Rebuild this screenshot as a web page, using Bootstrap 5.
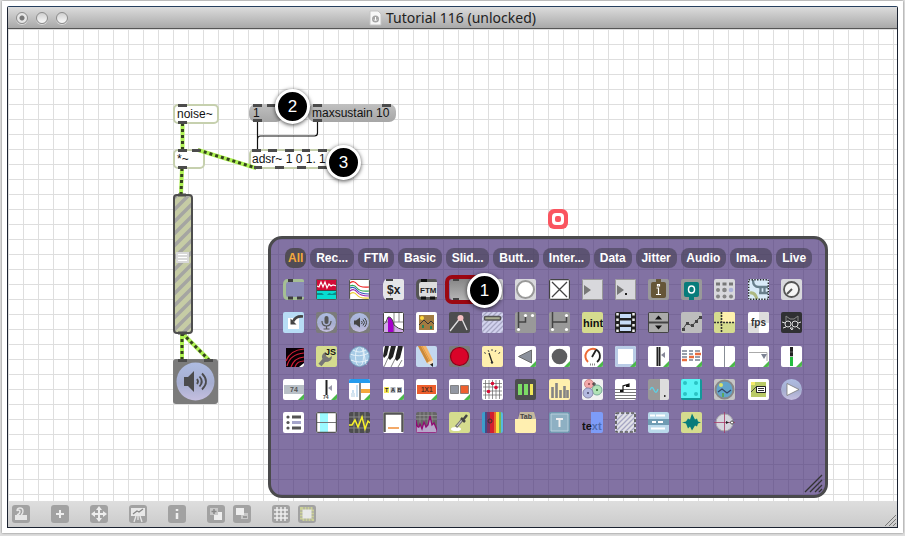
<!DOCTYPE html>
<html lang="en">
<head>
<meta charset="utf-8">
<meta name="viewport" content="width=device-width, initial-scale=1">
<title>Tutorial 116 (unlocked)</title>
<link href="https://cdn.jsdelivr.net/npm/bootstrap@5.3.0/dist/css/bootstrap.min.css" rel="stylesheet">
<style>
body{background:#dedede;font-family:"Liberation Sans",Arial,sans-serif;font-size:12px;line-height:16px;color:#111;padding:1px 2px 3px}
svg{display:block}
.sheet{background:#fff;padding:5px;box-shadow:0 0 2px #777;min-height:0}
.win{border:1px solid #1a2230;border-top-color:#27405f;border-radius:2px 2px 0 0;min-height:0}
.titlebar{height:22px;background:linear-gradient(#dcdcdc,#a9a9a9);border-bottom:1px solid #555;padding:0 8px}
.titlebar h1{font:14px/20px "Noto Sans","Open Sans",sans-serif;color:#222}
.light{width:12px;height:12px;border-radius:50%;border:1px solid #8c8c8c;background:linear-gradient(#cfcfcf,#fafafa);box-shadow:0 1px 0 #d8d8d8}
.light.dot{background:radial-gradient(#777 0 2px,#e6e6e6 3px)}
.lights{width:80px}
.patcher{min-height:0;overflow:hidden;background:linear-gradient(#dedede 1px,transparent 1px) 0 0/15px 15px,linear-gradient(90deg,#dedede 1px,transparent 1px) 0 0/15px 15px,#fff}
.node{position:absolute;height:20px;line-height:16px;white-space:nowrap;padding-left:2px}
.obj{background:#fff;border:2px solid #c6d0ae;border-radius:5px}
.msg{background:linear-gradient(#c0c0c0,#a6a6a6);border-radius:7px;height:18px;line-height:18px;padding-left:4px}
.n-noise{left:165px;top:75px;width:46px}
.n-mul{left:165px;top:120px;width:32px}
.n-one{left:241px;top:75px;width:34px}
.n-max{left:300px;top:75px;width:88px}
.n-adsr{left:241px;top:120px;width:84px;padding-left:1px}
.wires{position:absolute;left:0;top:0;pointer-events:none}
.step{position:absolute;width:35px;height:35px;border:3px solid #fff;border-radius:50%;background:#000;color:#fff;font-size:17px;box-shadow:0 1px 4px rgba(0,0,0,.7)}
.s1{left:459px;top:244px}.s2{left:267px;top:60px}.s3{left:318px;top:116px}
.rec{position:absolute;left:540px;top:180px}
.ring{position:absolute;left:435px;top:244px}
.palette{position:absolute;left:260px;top:207px;width:560px;height:262px;border:3px solid #4a4a4c;border-radius:14px;background:rgba(69,45,118,.67);padding:9px 14px}
.tabs{gap:4px;width:527px}
.tab{border:0;border-radius:8px;height:20px;padding:0 4px;background:rgba(70,64,84,.62);color:#fff;font-weight:700;line-height:20px}
.tab.active{background:#514c55;color:#f5a93c;padding:0 3px}
.tools{display:grid;grid-template-columns:repeat(16,21px);grid-template-rows:repeat(5,21px);justify-content:space-between;align-content:space-between;width:519px;height:154px;margin:11px 0 0 -2px}
.tool,.cmd{border:0;padding:0;background:none}
.tool svg{width:21px;height:21px;border-radius:2px;overflow:hidden}
.w{background:#fff}.g{background:#d8d8dc}.m{background:#999}.y{background:#d5dc8e}.c{background:#fff0ae}.k{background:#4d4d4f}.b{background:#c3d8ef}.d{background:#7b7b7b}
svg text{font-family:"Liberation Sans",Arial,sans-serif;font-weight:700}
.grip{position:absolute;right:2px;bottom:2px}
.cmdbar{position:relative;height:26px;background:linear-gradient(#dedede,#cbcbcb);padding:0 4px}
.cmd svg{width:18px;height:18px;border-radius:3px;background:#a2a2a2}
.grp{gap:8px}.groups{gap:21px}
</style>
</head>
<body class="vh-100 d-flex flex-column overflow-hidden">
<svg width="0" height="0" class="position-absolute" aria-hidden="true"><defs>
<path id="cn" d="M21 15v6h-6z" fill="#4bb84a"/>
<linearGradient id="ball" x2="0" y2="1"><stop stop-color="#aebce2"/><stop offset=".55" stop-color="#a6aed0"/><stop offset="1" stop-color="#c5bfe0"/></linearGradient>
<linearGradient id="grey" x2="0" y2="1"><stop stop-color="#868686"/><stop offset="1" stop-color="#b5b5b5"/></linearGradient>
<pattern id="hatch" width="12" height="12" patternUnits="userSpaceOnUse"><path fill="#c6cca5" d="M0 0h12v12H0z"/><path d="M-3 15L15-3M-9 9L9-9M3 21L21 3" stroke="#a5a5a2" stroke-width="3.500"/></pattern>
<pattern id="stripe" width="5" height="5" patternUnits="userSpaceOnUse"><path d="M-1 6L6-1M-1 1l2-2M4 6l2-2" stroke="#a6a6c4" stroke-width="1.300"/></pattern>
</defs></svg>
<main class="sheet flex-grow-1 d-flex flex-column">
<div class="win flex-grow-1 d-flex flex-column">
<header class="titlebar d-flex align-items-center flex-shrink-0">
<div class="lights d-flex gap-2"><button class="light dot p-0" aria-label="Close"></button><button class="light p-0" aria-label="Minimize"></button><button class="light p-0" aria-label="Zoom"></button></div>
<div class="flex-grow-1 d-flex justify-content-center align-items-center gap-1">
<svg width="13" height="16" viewBox="0 0 13 16"><path d="M1 1h8l3 3v11H1z" fill="#f7f7f7" stroke="#c4c4c4"/><circle cx="6.500" cy="9" r="3.500" fill="#a5a5a5"/><path d="M6.500 7v3M5 9.500l1.500 1.500L8 9.500" stroke="#fff" fill="none"/></svg>
<h1 class="m-0">Tutorial 116 (unlocked)</h1></div>
<div class="lights"></div>
</header>
<section class="patcher flex-grow-1 position-relative" aria-label="Patcher">
<div class="node obj n-noise">noise~</div>
<div class="node obj n-mul">*~</div>
<div class="node msg n-one">1</div>
<div class="node msg n-max">maxsustain 10</div>
<div class="node obj n-adsr">adsr~ 1 0 1. 1</div>
<svg class="wires" width="400" height="400" viewBox="8 29 400 400">
<rect x="174" y="195" width="18" height="138" rx="3" fill="url(#hatch)" stroke="#4d4d4d" stroke-width="2"/>
<path d="M176 252h13v11h-13z" fill="#d8d8d8"/><path d="M178 254.500h9m-9 3h9m-9 3h9" stroke="#fff"/>
<rect x="173" y="359" width="45" height="45" rx="3" fill="#7b7b7b"/><circle cx="195.500" cy="381.500" r="19" fill="url(#ball)"/>
<path d="M184 377h4l6-6v21l-6-6h-4z" fill="#4b4b4d"/><path d="M197 379q2 2.500 0 5M199.500 376.500q4.500 5 0 10M202 373.500q8 8 0 16" fill="none" stroke="#4b4b4d" stroke-width="1.800"/>
<path d="M257.500 121v30M317.500 121v12q0 3-3 3h-54q-3 0-3 4" fill="none" stroke="#111" stroke-width="1.200"/>
<path d="M182.500 123v28M182 168l-1 27M198 150l58 18M182 333v27M182 333l27 27" fill="none" stroke="#aef252" stroke-width="4"/>
<g stroke="#35421f" stroke-width="3" stroke-dasharray="3 3" fill="none"><path d="M182.500 123v28"/><path d="M182 168l-1 27"/><path d="M198 150l58 18"/><path d="M182 333v27"/><path d="M182 333l27 27"/></g>
<path d="M178 105.500h9M178 122.500h9M178 150.500h9M192 150.500h8M178 167.500h9M253 105.500h9M267 105.500h9M253 120.500h9M313 105.500h9M382 105.500h9M313 120.500h9M252 150.500h9M268 150.500h9M285 150.500h9M302 150.500h8M318 150.500h9M254 167.500h8M275 167.500h9M297 167.500h9M318 167.500h9M178 360.500h9M204 360.500h9M178 333h9M178 195h8" stroke="#4c4c4c" stroke-width="3"/>
</svg>
<div class="rec"><svg width="20" height="20"><rect width="20" height="20" rx="6" fill="#fa5560"/><rect x="4" y="4" width="12" height="12" rx="4" fill="#fff"/><rect x="7" y="7" width="6" height="6" rx="2" fill="#fa5560"/></svg></div>
<section class="palette" aria-label="Object palette">
<nav class="tabs d-flex"><button class="tab active">All</button><button class="tab flex-fill">Rec...</button><button class="tab flex-fill">FTM</button><button class="tab flex-fill">Basic</button><button class="tab flex-fill">Slid...</button><button class="tab flex-fill">Butt...</button><button class="tab flex-fill">Inter...</button><button class="tab flex-fill">Data</button><button class="tab flex-fill">Jitter</button><button class="tab flex-fill">Audio</button><button class="tab flex-fill">Ima...</button><button class="tab flex-fill">Live</button></nav>
<div class="tools">
<!-- row 1 -->
<button class="tool" aria-label="object"><svg viewBox="0 0 21 21"><path d="M21 1.500H5q-3.500 0-3.500 4v10q0 4 3.500 4h16" fill="#8a8ab6" stroke="#a5bf94" stroke-width="3"/><path d="M5 1.500h5M5 19h5M14 19h5" stroke="#3d3d3d" stroke-width="3"/></svg></button>
<button class="tool" aria-label="signal view"><svg viewBox="0 0 21 21"><path fill="#d20d38" d="M0 0h21v11H0z"/><path fill="#08ddd0" d="M0 12h21v9H0z"/><path d="M1 7l2 1 2-5 2 5 2-5 2 6 2-4 2 2 2-1 4 1" fill="none" stroke="#fff" stroke-width="1.200"/><path d="M1 14h5l2 2h3l2-2 3 1 4-2v3H1z" fill="#078f8d"/><path d="M0 11.500h21" stroke="#444"/><path d="M.5.500h20v20H.500z" fill="none" stroke="#555"/></svg></button>
<button class="tool" aria-label="multi curve"><svg class="w" viewBox="0 0 21 21"><g fill="none" stroke-width="1.200"><path stroke="#e22" d="M1 4q4-3 7 1t12 3"/><path stroke="#3a5" d="M1 7q4-2 7 2t12 3"/><path stroke="#35b" d="M1 9q4-2 7 2t12 4"/><path stroke="#92a" d="M1 12q4-3 7 1t12 4"/><path stroke="#ec3" d="M1 15q4-3 7 1t12 3"/><path stroke="#555" d="M.5.500h20v20H.500z"/></g></svg></button>
<button class="tool" aria-label="ftm message"><svg viewBox="0 0 21 21"><path d="M3 0h18v21H3q-3-2-3-5V5q0-3 3-5z" fill="#e5e5e8"/><path d="M3 1h7M3 20h7" stroke="#444" stroke-width="2"/><text x="4" y="15" font-size="12" fill="#222">$x</text></svg></button>
<button class="tool" aria-label="ftm object"><svg viewBox="0 0 21 21"><path d="M21 1.500H5q-3.500 0-3.500 4v10q0 4 3.500 4h16" fill="#ddd" stroke="#555" stroke-width="3"/><path d="M5 19h5M14 19h5M5 1.500h6" stroke="#111" stroke-width="3"/><text x="4" y="13.500" font-size="8" fill="#222">FTM</text></svg></button>
<button class="tool" aria-label="message"><svg viewBox="0 0 21 21"><path d="M21 0H4Q1 0 1 4v13q0 4 3 4h17" fill="url(#grey)"/><path d="M4 1h6M4 20h6" stroke="#444" stroke-width="2"/></svg></button>
<button class="tool" aria-label="comment"><svg class="g" viewBox="0 0 21 21"><path d="M3 4h15v13H3z" fill="#eee"/></svg></button>
<button class="tool" aria-label="button"><svg class="g" viewBox="0 0 21 21"><circle cx="10.500" cy="10.500" r="8.500" fill="#fff" stroke="#999" stroke-width="2"/></svg></button>
<button class="tool" aria-label="toggle"><svg class="w" viewBox="0 0 21 21"><path d="M.5.500h20v20H.500zM3 3l15 15M18 3L3 18" fill="none" stroke="#444" stroke-width="1.300"/></svg></button>
<button class="tool" aria-label="integer number"><svg class="g" viewBox="0 0 21 21"><path d="M.5.500h20v20H.500z" fill="none" stroke="#999"/><path d="M2 6l7 5-7 5z" fill="#777"/></svg></button>
<button class="tool" aria-label="float number"><svg class="g" viewBox="0 0 21 21"><path d="M.5.500h20v20H.500z" fill="none" stroke="#999"/><path d="M2 6l7 5-7 5z" fill="#777"/><path d="M10 14h2v2h-2z" fill="#222"/></svg></button>
<button class="tool" aria-label="inlet"><svg class="m" viewBox="0 0 21 21"><rect x="3" y="3" width="15" height="16" rx="2" fill="#655637"/><path d="M8 0h5v4H8z" fill="#655637"/><path d="M8.500 9h2v6M8 15.500h5M9.500 5.500h2v1.500h-2z" fill="none" stroke="#fff" stroke-width="1.200"/></svg></button>
<button class="tool" aria-label="outlet"><svg class="m" viewBox="0 0 21 21"><rect x="3" y="3" width="15" height="15" rx="2" fill="#087c7b"/><path d="M8 16h5v5H8z" fill="#087c7b"/><ellipse cx="10.500" cy="10.500" rx="3" ry="3.500" fill="none" stroke="#fff" stroke-width="1.500"/></svg></button>
<button class="tool" aria-label="matrix"><svg class="g" viewBox="0 0 21 21"><path d="M4 3.500v3M10.500 3.500v3M17 3.500v3" stroke="#777" stroke-width="4"/><g fill="#858585"><circle cx="4" cy="11" r="2"/><circle cx="10.500" cy="11" r="2.300"/><circle cx="4" cy="17.500" r="2"/><circle cx="10.500" cy="17.500" r="2"/><circle cx="17" cy="17.500" r="2"/></g><circle cx="17" cy="11" r="2.300" fill="#acb2d8"/></svg></button>
<button class="tool" aria-label="bpatcher"><svg viewBox="0 0 21 21"><path d="M0 0h21v21H0z" fill="#d9ebf8"/><path d="M5 1q0 7 6 7h9M11 14h9M12.500 8v6M16.500 8v6" fill="none" stroke="#68808c" stroke-width="2.300"/><path d="M2 14q5-1 7 6" fill="none" stroke="#aeb982" stroke-width="3"/><path d="M.7.700h19.600v19.600H.700z" fill="none" stroke="#222" stroke-width="1.400" stroke-dasharray="1.400 1.400"/></svg></button>
<button class="tool" aria-label="dial"><svg class="g" viewBox="0 0 21 21"><circle cx="10.500" cy="10.500" r="7.500" fill="#f5f5f5" stroke="#555" stroke-width="1.800"/><path d="M11 10l-5 5" stroke="#555" stroke-width="2"/></svg></button>
<!-- row 2 -->
<button class="tool" aria-label="send out"><svg viewBox="0 0 21 21"><path d="M0 0h21v21H0z" fill="#b7dcf5"/><path d="M5 6h11v11H5z" fill="#fff"/><path d="M20 4.500q-7-1-10 5" fill="none" stroke="#444" stroke-width="2.600"/><path d="M7.500 6.500v6h6z" fill="#444"/></svg></button>
<button class="tool" aria-label="audio input"><svg class="d" viewBox="0 0 21 21"><circle cx="10.500" cy="10.500" r="9.500" fill="url(#ball)"/><rect x="8.500" y="4" width="4" height="8" rx="2" fill="#555"/><path d="M6 9q0 5 4.500 5T15 9M10.500 14v3M7.500 17h6" fill="none" stroke="#555" stroke-width="1.200"/></svg></button>
<button class="tool" aria-label="audio output"><svg class="d" viewBox="0 0 21 21"><circle cx="10.500" cy="10.500" r="9.500" fill="url(#ball)"/><path d="M5 8.500h2l4-3v10l-4-3H5z" fill="#444"/><path d="M12.500 9q1.500 1.500 0 3M14 7.500q3 3 0 6M15.500 6q4 4.500 0 9" fill="none" stroke="#444"/></svg></button>
<button class="tool" aria-label="filter graph"><svg class="w" viewBox="0 0 21 21"><path d="M0 13q3-1 5-8 4 0 6 8 4 4 10 5v3H0z" fill="#d0a9e8"/><path d="M5 5q4-1 6 8v8H5z" fill="#a500cb"/><path d="M11 0v21M0 10h5M11 10h10M16 0v10" stroke="#888"/><path d="M0 13q3-1 5-8 4-1 6 8 4 4 10 5" fill="none" stroke="#444"/><path d="M.5.500h20v20H.500z" fill="none" stroke="#444"/></svg></button>
<button class="tool" aria-label="picture"><svg class="w" viewBox="0 0 21 21"><path d="M3 3h15v15H3z" fill="#a27b41"/><path d="M3 13l5-5 4 4 3-3 3 3" fill="none" stroke="#333"/><circle cx="6" cy="6" r="2" fill="#ffd93d"/><path d="M6 13h2v3H6zM14 14h2v3h-2z" fill="#27845a"/></svg></button>
<button class="tool" aria-label="function"><svg class="k" viewBox="0 0 21 21"><path d="M1 19L12 5l6 13" fill="none" stroke="#ddd" stroke-width="1.400"/><circle cx="11.500" cy="6" r="3" fill="#f5c0c2"/></svg></button>
<button class="tool" aria-label="slider handle"><svg viewBox="0 0 21 21"><path d="M0 0h21v21H0z" fill="#d2d2ee"/><path d="M0 0h21v21H0z" fill="url(#stripe)"/><rect x="2.500" y="4.500" width="16" height="3.500" rx="1" fill="#a8ad93" stroke="#555" stroke-width="1.500"/></svg></button>
<button class="tool" aria-label="gate"><svg class="m" viewBox="0 0 21 21"><path d="M3.500 0v17M3.500 10h7V3" fill="none" stroke="#444" stroke-width="1.500"/><g fill="#fff"><circle cx="10.500" cy="3.500" r="1.600"/><circle cx="17.500" cy="3.500" r="1.600"/><circle cx="3.500" cy="17.500" r="1.600"/></g></svg></button>
<button class="tool" aria-label="switch"><svg class="m" viewBox="0 0 21 21"><path d="M3.500 0v17M3.500 10h14V3" fill="none" stroke="#444" stroke-width="1.500"/><g fill="#fff"><circle cx="17.500" cy="3.500" r="1.600"/><circle cx="3.500" cy="17.500" r="1.600"/><circle cx="17.500" cy="17.500" r="1.600"/></g></svg></button>
<button class="tool" aria-label="hint"><svg class="y" viewBox="0 0 21 21"><text x="1" y="15" font-size="11" fill="#111">hint</text></svg></button>
<button class="tool" aria-label="movie"><svg viewBox="0 0 21 21"><path d="M0 0h21v21H0z" fill="#222"/><path d="M5 2h11v4H5zM5 8.500h11v4H5zM5 15h11v4H5z" fill="#c7dcf7"/><path d="M2.500 1v20M18.500 1v20" stroke="#eee" stroke-width="2.500" stroke-dasharray="2.500 3"/></svg></button>
<button class="tool" aria-label="increment"><svg viewBox="0 0 21 21"><path d="M0 0h21v21H0z" fill="#444"/><path d="M1 1h19v8.500H1zM1 11.500h19V20H1z" fill="#aaa"/><path d="M7 7.500l3.500-4 3.500 4zM7 13.500h7l-3.500 4z" fill="#111"/></svg></button>
<button class="tool" aria-label="line table"><svg viewBox="0 0 21 21"><path d="M0 0h21v21H0z" fill="#bdbdbd"/><path d="M2 17l4-6 5 3 8-9" fill="none" stroke="#444"/><path d="M1 16h3v3H1zM5 10h3v3H5zM10 12h3v3h-3zM14 8h3v3h-3zM18 4h3v3h-3z" fill="#444"/></svg></button>
<button class="tool" aria-label="grid split"><svg class="y" viewBox="0 0 21 21"><path d="M8 0h13v10H8z" fill="#fff1ae"/><path d="M7.500 0v21M0 10.500h21" stroke="#333" stroke-width="1.600" stroke-dasharray="2 1"/></svg></button>
<button class="tool" aria-label="frames per second"><svg class="w" viewBox="0 0 21 21"><path d="M0 11h11v10H0zM11 0h10v11H11z" fill="#ddd"/><text x="3" y="14" font-size="10" fill="#333">fps</text></svg></button>
<button class="tool" aria-label="cat glasses"><svg viewBox="0 0 21 21"><path d="M0 0h21v21H0z" fill="#303033"/><g fill="none" stroke="#ddd"><path d="M5 9V4l4 3h4l4-3v5" stroke="#888"/><circle cx="7" cy="12" r="3"/><circle cx="14" cy="12" r="3"/><path d="M1 10l3 1M17 11l3-1M9 16h3l-1 2zM2 16l3-1M16 15l3 2"/></g></svg></button>
<!-- row 3 -->
<button class="tool" aria-label="radar"><svg viewBox="0 0 21 21"><path d="M3 2h18v19H3z" fill="#080005"/><g fill="none" stroke="#d51e39" stroke-width="1.200"><path d="M3 15Q7 4 21 3M4 20Q7 8 21 7M8 21q3-9 13-10M12 21q2-6 9-6"/></g><path d="M21 17v4h-5z" fill="#fff"/></svg></button>
<button class="tool" aria-label="javascript UI"><svg class="y" viewBox="0 0 21 21"><path d="M4 19l5-6" stroke="#777" stroke-width="4"/><path d="M6 12a5 5 0 0 1 4-6v4l3 2 3-2q0 6-7 6z" fill="#777"/><text x="9" y="8.500" font-size="9" fill="#111">JS</text></svg></button>
<button class="tool" aria-label="web browser"><svg viewBox="0 0 21 21"><circle cx="10.500" cy="10.500" r="10" fill="#a7cbe6"/><g fill="none" stroke="#e4f0f8"><ellipse cx="10.500" cy="10.500" rx="4" ry="10"/><path d="M1 8q9 4 19-1M2 14q8 4 17 0M4 4q6 4 13 0M14 1l3 18"/></g><circle cx="10.500" cy="10.500" r="10" fill="none" stroke="#7195b5"/></svg></button>
<button class="tool" aria-label="keyboard"><svg class="w" viewBox="0 0 21 21"><path d="M1 21l4-9M8 21l4-8M15 21l4-7" stroke="#888"/><path d="M2 0h4L4 9l-3 3-1-2zM8 0h5l-3 11-3 3-2-2zM15 0h5l-3 12-3 3-2-2z" fill="#222"/></svg></button>
<button class="tool" aria-label="pencil"><svg class="b" viewBox="0 0 21 21"><path d="M2 0h8l7 14v6l-6-3z" fill="#f3b56a"/><path d="M2 0h3l8 15-2 2z" fill="#c9893a"/><path d="M6 0l8 15" stroke="#e59739"/><path d="M11 17l6-3v6z" fill="#f5dfc1"/><path d="M14 18.500l3-1.500v4z" fill="#222"/></svg></button>
<button class="tool" aria-label="LED"><svg class="d" viewBox="0 0 21 21"><circle cx="10.500" cy="10.500" r="9" fill="#d90429" stroke="#8d0018" stroke-width="1.200"/></svg></button>
<button class="tool" aria-label="meter"><svg class="c" viewBox="0 0 21 21"><path d="M7 7l3 9" stroke="#222" stroke-width="1.300"/><path d="M2.500 6l1 2M6 4l1 2M10 3v2M14 4l-1 2M18 6l-1.500 2" stroke="#555"/><circle cx="10" cy="16.500" r="1.200" fill="#333"/></svg></button>
<button class="tool" aria-label="live arrow"><svg class="w" viewBox="0 0 21 21"><path d="M3.500 10.500L16.500 4v13z" fill="#8c919c" stroke="#555" stroke-width=".8"/><use href="#cn"/></svg></button>
<button class="tool" aria-label="live button"><svg class="w" viewBox="0 0 21 21"><circle cx="10.500" cy="10.500" r="7.800" fill="#5d5d60"/><use href="#cn"/></svg></button>
<button class="tool" aria-label="live dial"><svg class="w" viewBox="0 0 21 21"><path d="M6 16A7.500 7.500 0 0 1 14 3.500" fill="none" stroke="#ed6a35" stroke-width="2"/><path d="M14 3.500A7.500 7.500 0 0 1 15 16M10 11l4-7" fill="none" stroke="#222" stroke-width="1.800"/><path d="M8 18.500h6" stroke="#888" stroke-dasharray="1 1" stroke-width="2"/><use href="#cn"/></svg></button>
<button class="tool" aria-label="live panel"><svg class="w" viewBox="0 0 21 21"><path d="M1.500 1.500h18v18h-18z" fill="none" stroke="#b9cce6" stroke-width="3"/><use href="#cn"/></svg></button>
<button class="tool" aria-label="live gain"><svg class="w" viewBox="0 0 21 21"><path d="M10.500 1v19" stroke="#222" stroke-width="4"/><path d="M10.500 1v19" stroke="#888"/><path d="M17 6v6l-4-3z" fill="#889"/><use href="#cn"/></svg></button>
<button class="tool" aria-label="live grid"><svg class="w" viewBox="0 0 21 21"><path d="M1 5h5M1 8h5M1 11h5M8 5h4M8 8h4M8 14h4M14 5h5M14 11h5M14 14h5" stroke="#778090" stroke-width="1.600"/><path d="M14 8h6M8 11h5M1 14h5" stroke="#e96b3c" stroke-width="2.500"/><use href="#cn"/></svg></button>
<button class="tool" aria-label="live line"><svg class="w" viewBox="0 0 21 21"><path d="M10.500 0v21" stroke="#888d96"/><use href="#cn"/></svg></button>
<button class="tool" aria-label="live menu"><svg class="w" viewBox="0 0 21 21"><path d="M1 6.500h18V15" fill="none" stroke="#aaa"/><path d="M13 8h6l-3 5z" fill="#7c8293"/><use href="#cn"/></svg></button>
<button class="tool" aria-label="live meter"><svg class="w" viewBox="0 0 21 21"><path d="M9 1h3v9H9z" fill="#222"/><path d="M9 6h3M9 11h3" stroke="#666"/><path d="M9 11h3v9H9z" fill="#25bd42"/><use href="#cn"/></svg></button>
<!-- row 4 -->
<button class="tool" aria-label="live number"><svg class="w" viewBox="0 0 21 21"><path d="M1 6h20v9H1z" fill="#b9c0c7"/><text x="7" y="13" font-size="7" fill="#555">74</text><use href="#cn"/></svg></button>
<button class="tool" aria-label="live slider"><svg class="w" viewBox="0 0 21 21"><path d="M10.500 1v15" stroke="#222" stroke-width="2"/><path d="M16 6v6l-4-3z" fill="#99a"/><text x="7" y="20" font-size="5" fill="#444">74</text><use href="#cn"/></svg></button>
<button class="tool" aria-label="live step"><svg class="w" viewBox="0 0 21 21"><path d="M0 0h21v4H0z" fill="#249bee"/><path d="M12 10h9v4h-9z" fill="#f4a83b"/><path d="M8 6v12M4 11v7" stroke="#b6d5ec" stroke-width="1.500"/><path d="M11 4v17" stroke="#444" stroke-width="1.300"/><path d="M2 14h4v4H2z" fill="#d7e6f0"/><use href="#cn"/></svg></button>
<button class="tool" aria-label="live tab"><svg class="w" viewBox="0 0 21 21"><path d="M1 8h5v6H1z" fill="#f6e757"/><path d="M7.500 8h5v6h-5zM14 8h5v6h-5z" fill="#b3b8bf"/><text x="2" y="13" font-size="5.500" fill="#222">T</text><text x="8" y="13" font-size="5.500" fill="#222">A</text><text x="14.500" y="13" font-size="5.500" fill="#222">B</text><use href="#cn"/></svg></button>
<button class="tool" aria-label="live text"><svg class="w" viewBox="0 0 21 21"><path d="M1 6h19v9H1z" fill="#ed5e2c"/><text x="5" y="13" font-size="6.500" fill="#54301f">1X1</text><use href="#cn"/></svg></button>
<button class="tool" aria-label="live toggle"><svg class="w" viewBox="0 0 21 21"><path d="M1.500 6.500h8v8h-8z" fill="#9297a2" stroke="#555" stroke-width=".6"/><path d="M11.500 6.500h8v8h-8z" fill="#ee602e" stroke="#555" stroke-width=".6"/><use href="#cn"/></svg></button>
<button class="tool" aria-label="matrix control"><svg class="w" viewBox="0 0 21 21"><path d="M3.500 1v19M7 1v19M10.500 1v19M14 1v19M17.500 1v19M1 4.500h19M1 8h19M1 12h19M1 16h19" stroke="#666" stroke-width=".7"/><g fill="#d80d36"><circle cx="10.500" cy="4.500" r="1.800"/><circle cx="14" cy="8.500" r="1.800"/><circle cx="6.500" cy="12.500" r="1.800"/></g></svg></button>
<button class="tool" aria-label="multi slider"><svg class="k" viewBox="0 0 21 21"><path d="M3 5h4v11H3zM9 5h4v11H9z" fill="#7cdb66"/><path d="M15 5h3v11h-3z" fill="#f2e85b"/></svg></button>
<button class="tool" aria-label="table bars"><svg class="c" viewBox="0 0 21 21"><path d="M3.500 19V8M7.500 19V4M11.500 19v-8M15.500 19V7M18.500 19v-8" stroke="#858585" stroke-width="2.600"/></svg></button>
<button class="tool" aria-label="nodes"><svg viewBox="0 0 21 21"><path d="M0 0h21v21H0z" fill="#f1f1f1"/><circle cx="7" cy="5" r="4.500" fill="#f3a8aa" stroke="#c88"/><circle cx="15" cy="11" r="5" fill="#b1e2b6" stroke="#7a9"/><circle cx="6" cy="14" r="5" fill="#b4b9df" stroke="#88a"/><path d="M10 5h4M12 3v4" stroke="#333"/><circle cx="7" cy="5" r="1" fill="#844"/><circle cx="6" cy="14" r="1" fill="#446"/><circle cx="15" cy="11" r="1" fill="#363"/></svg></button>
<button class="tool" aria-label="notation"><svg class="w" viewBox="0 0 21 21"><path d="M0 10.500h21M0 13.500h21M0 16.500h21M0 19.500h21" stroke="#777"/><path d="M8 13V7l6-2v3" stroke="#111" stroke-width="1.200" fill="none"/><path d="M5 11h3v2H5zM11 6h3v2h-3z" fill="#111"/></svg></button>
<button class="tool" aria-label="number signal"><svg class="m" viewBox="0 0 21 21"><path d="M12 0h9v21h-9z" fill="#ddd"/><path d="M2 11q2-5 4 0t4-1" fill="none" stroke="#5dd1e5" stroke-width="1.300"/><path d="M16 16h1.500v2H16z" fill="#333"/></svg></button>
<button class="tool" aria-label="pattern box"><svg viewBox="0 0 21 21"><path d="M0 0h21v21H0z" fill="#12999a"/><path d="M0 0h19v19H0z" fill="#58f4f4"/><g fill="#2bc3c3"><circle cx="4" cy="4" r="2"/><circle cx="15" cy="4" r="2"/><circle cx="4" cy="15" r="2"/><circle cx="15" cy="15" r="2"/></g></svg></button>
<button class="tool" aria-label="picture control"><svg viewBox="0 0 21 21"><path d="M0 0h21v21H0z" fill="#c5c5c5"/><circle cx="10.500" cy="10.500" r="9" fill="#62a4ca" stroke="#888" stroke-width="2"/><path d="M4 13l4-3 5 4 4-3" fill="none" stroke="#346" stroke-width="1.300"/><circle cx="7" cy="6" r="2" fill="#d7e26a"/><path d="M8 14h2v4H8z" fill="#5ca85a"/></svg></button>
<button class="tool" aria-label="picture slider"><svg class="w" viewBox="0 0 21 21"><path d="M3 3h15v15H3z" fill="#b9ca66"/><path d="M3 13l6-6" stroke="#444"/><path d="M8.500 7.500h9v6h-9z" fill="#fff" stroke="#222"/><path d="M10 9.500h6M10 11.500h6" stroke="#333"/><path d="M3 3h4v3H3z" fill="#f5ec6a"/></svg></button>
<button class="tool" aria-label="playbar"><svg viewBox="0 0 21 21"><circle cx="10.500" cy="10.500" r="10.500" fill="url(#ball)"/><path d="M6 4.500l12 6-12 6z" fill="#fff" stroke="#777" stroke-width=".8"/></svg></button>
<!-- row 5 -->
<button class="tool" aria-label="radio group"><svg class="w" viewBox="0 0 21 21"><path d="M9 5h9M9 16h9" stroke="#555" stroke-width="3"/><path d="M9 10.500h9" stroke="#a6a6cb" stroke-width="3"/><g fill="#555"><circle cx="5" cy="5" r="1.600"/><circle cx="5" cy="10.500" r="1.600"/><circle cx="5" cy="16" r="1.600"/></g></svg></button>
<button class="tool" aria-label="range"><svg class="w" viewBox="0 0 21 21"><path d="M4 1h8v19H4z" fill="#9bfaff"/><path d="M0 10.500h21" stroke="#777"/><path d="M.5.500h20v20H.500z" fill="none" stroke="#555" stroke-width="1.500"/></svg></button>
<button class="tool" aria-label="scope"><svg class="k" viewBox="0 0 21 21"><path d="M5 0v21M10 0v21M16 0v21M0 5h21M0 16h21" stroke="#888"/><path d="M0 13h3l3-5 3 7 4-10 3 12 3-8 2 2" fill="none" stroke="#f7f22c" stroke-width="1.500"/></svg></button>
<button class="tool" aria-label="slider"><svg class="w" viewBox="0 0 21 21"><path d="M1.500 20V1.500h18V20" fill="none" stroke="#555" stroke-width="2.500"/><path d="M5 16h11" stroke="#f3a969" stroke-width="2"/></svg></button>
<button class="tool" aria-label="spectroscope"><svg viewBox="0 0 21 21"><path d="M0 0h21v21H0z" fill="#666"/><path d="M0 3.500h21M0 7h21M4 0v12M8 0v12M12 0v12M16 0v12" stroke="#999" stroke-width=".7"/><path d="M0 8q1 8 3 7l1-3 2 5 2-7 2 5 2-2 2-9 2 9 2-2 3 7v3H0z" fill="#b7a7ca" stroke="#900b72" stroke-width="1.300"/></svg></button>
<button class="tool" aria-label="suckah"><svg class="y" viewBox="0 0 21 21"><ellipse cx="7" cy="17" rx="5" ry="2" fill="#fff"/><path d="M7 15l7-8" stroke="#777" stroke-width="3"/><path d="M8 14l5-6" stroke="#ddd"/><path d="M12 6l4 4M14 8l4-5" stroke="#444" stroke-width="2.500"/></svg></button>
<button class="tool" aria-label="color swatch"><svg viewBox="0 0 21 21"><path d="M0 0h3v21H0z" fill="#3b9ecb"/><path d="M3 0h2v21H3z" fill="#454b87"/><path d="M5 0h3v21H5z" fill="#7c3263"/><path d="M8 0h4v21H8z" fill="#d3202f"/><path d="M12 0h2v21h-2z" fill="#e76c2b"/><path d="M14 0h3v21h-3z" fill="#f5df43"/><path d="M17 0h2v21h-2z" fill="#76b755"/><path d="M19 0h2v21h-2z" fill="#55b9e0"/><circle cx="8" cy="9" r="2" fill="none" stroke="#333"/></svg></button>
<button class="tool" aria-label="tab control"><svg viewBox="0 0 21 21"><path d="M0 7h21v14H0z" fill="#ffefb0"/><path d="M5 0h14l2 7H3z" fill="#c4b89e"/><text x="5" y="6.500" font-size="7" fill="#444">Tab</text></svg></button>
<button class="tool" aria-label="text button"><svg viewBox="0 0 21 21"><path d="M0 0h21v21H0z" fill="#7199b1"/><path d="M2 2h17v17H2z" fill="#8eb0c3" stroke="#b8d0dc"/><path d="M7 7h7M10.500 7v8" stroke="#eee" stroke-width="2"/></svg></button>
<button class="tool" aria-label="text editor"><svg viewBox="0 0 21 21"><path d="M9 0h12v21H9z" fill="#7d9cf8"/><text x="0" y="18" font-size="11" fill="#111">te<tspan fill="#536cad">xt</tspan></text></svg></button>
<button class="tool" aria-label="area"><svg viewBox="0 0 21 21"><path d="M0 0h21v21H0z" fill="#e1e1e7"/><path d="M0 0h21v21H0z" fill="url(#stripe)"/><path d="M1 1h19v19H1z" fill="none" stroke="#555" stroke-width="1.700" stroke-dasharray="3 2"/></svg></button>
<button class="tool" aria-label="menu"><svg viewBox="0 0 21 21"><path d="M0 0h21v21H0z" fill="#b9d9eb"/><path d="M0 7h21v6H0z" fill="#6f9cb3"/><path d="M2 3.500h5M8 3.500h9M4 10h4M10 10h5M3 16.500h14" stroke="#fff" stroke-width="2"/></svg></button>
<button class="tool" aria-label="waveform"><svg class="y" viewBox="0 0 21 21"><path d="M1 10.500l4-1 2-3 2 1 2-6 3 6 2-1 1 3 3 1-3 1-1 3-2-1-3 5-2-4-2 2-2-5z" fill="#077c7b"/></svg></button>
<button class="tool" aria-label="zero cross"><svg viewBox="0 0 21 21"><circle cx="10.500" cy="10.500" r="8.500" fill="#d5d5de" stroke="#aaa"/><path d="M10.500 0v21M0 10.500h21" stroke="#a43865" stroke-width=".8"/><circle cx="18" cy="10.500" r="1.500" fill="#fff" stroke="#333" stroke-width=".8"/><path d="M12 9l3 1.500-3 1.500z" fill="#222"/></svg></button>
</div>
<svg class="grip" width="19" height="19" viewBox="0 0 19 19"><path d="M1 18L18 1M6 18L18 6M11 18l7-7M15 18l3-3" stroke="#333" stroke-width="1.300"/></svg>
</section>
<svg class="ring" width="40" height="34" viewBox="0 0 40 34"><rect x="4" y="4" width="32" height="25" rx="5" fill="none" stroke="#9c0712" stroke-width="4"/></svg>
<div class="step s1 d-flex justify-content-center align-items-center">1</div>
<div class="step s2 d-flex justify-content-center align-items-center">2</div>
<div class="step s3 d-flex justify-content-center align-items-center">3</div>
</section>
<footer class="cmdbar d-flex align-items-center flex-shrink-0 groups">
<button class="cmd" aria-label="Unlock"><svg viewBox="0 0 18 18"><path d="M3 10h12v5H3z" fill="#e6e6e6"/><path d="M5 10q3-1 3-4-2-2-3 0 0-3 3-3t3 3-2 4" fill="none" stroke="#e6e6e6" stroke-width="1.400"/></svg></button>
<button class="cmd" aria-label="New object"><svg viewBox="0 0 18 18"><path d="M9 5v8M5 9h8" stroke="#eee" stroke-width="2"/></svg></button>
<button class="cmd" aria-label="Move"><svg viewBox="0 0 18 18"><path d="M9 3v12M3 9h12" stroke="#eee" stroke-width="2"/><path d="M9 1l3 4H6zM9 17l-3-4h6zM1 9l4-3v6zM17 9l-4 3V6z" fill="#eee"/></svg></button>
<button class="cmd" aria-label="Presentation"><svg viewBox="0 0 18 18"><path d="M2 3h14v8H2z" fill="#e8e8e8"/><path d="M4 9l4-3 2 1 4-3" fill="none" stroke="#888" stroke-width="1.300"/><path d="M7 11l-2 6M11 11l2 6M9 11v4" stroke="#e8e8e8" stroke-width="1.300"/></svg></button>
<button class="cmd" aria-label="Inspector"><svg viewBox="0 0 18 18"><path d="M9 8v6M9 4v2" stroke="#eee" stroke-width="2.500"/></svg></button>
<div class="grp d-flex"><button class="cmd" aria-label="Bring forward"><svg viewBox="0 0 18 18"><path d="M7 7h8v8H7z" fill="#eee"/><path d="M3 3h8v7H3z" fill="#c8c8c8"/><path d="M7 4v5M4.500 6.500h5" stroke="#888" stroke-width="1.500"/></svg></button><button class="cmd" aria-label="Send back"><svg viewBox="0 0 18 18"><path d="M8 8h7v6H8z" fill="#c8c8c8"/><path d="M3 3h8v7H3z" fill="#eee"/><path d="M10 12h4" stroke="#888" stroke-width="1.500"/></svg></button></div>
<div class="grp d-flex"><button class="cmd" aria-label="Grid"><svg viewBox="0 0 18 18"><path d="M5 2v14M9 2v14M13 2v14M2 5h14M2 9h14M2 13h14" stroke="#eee" stroke-width="1.500"/></svg></button><button class="cmd" aria-label="Snap to object"><svg viewBox="0 0 18 18"><path d="M3.500 3.500h11v11h-11z" fill="none" stroke="#cbd097" stroke-width="3" stroke-dasharray="2 1"/><path d="M4.500 4.500h9v9h-9z" fill="#e8e8e8"/></svg></button></div>
<svg class="position-absolute end-0 bottom-0" width="13" height="13" viewBox="0 0 13 13"><path d="M1 12L12 1M5 12l7-7M9 12l3-3" stroke="#777"/></svg>
</footer>
</div>
</main>
<script src="https://cdn.jsdelivr.net/npm/bootstrap@5.3.0/dist/js/bootstrap.bundle.min.js"></script>
</body>
</html>
